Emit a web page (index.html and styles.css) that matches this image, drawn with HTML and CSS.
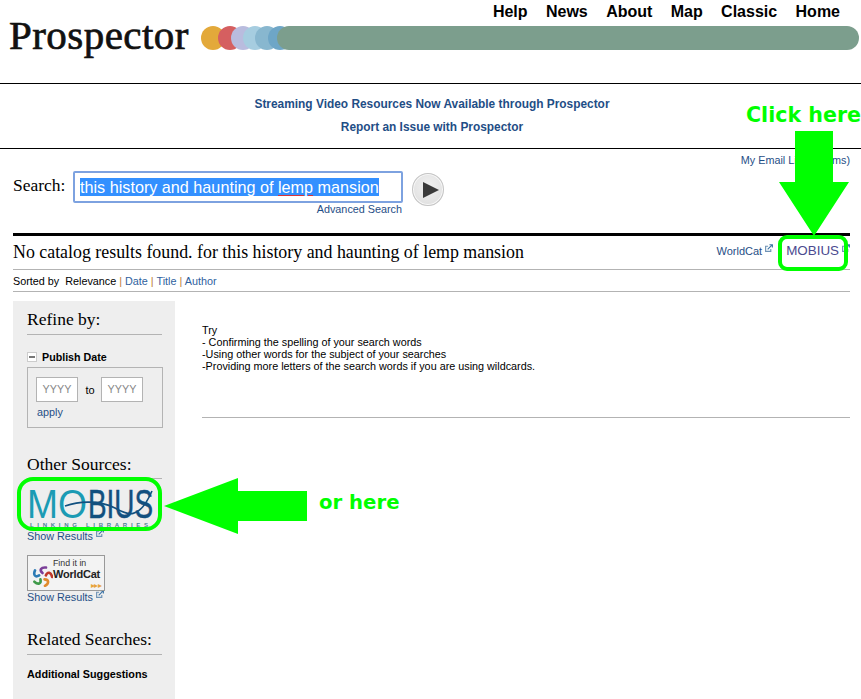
FILE: index.html
```html
<!DOCTYPE html>
<html lang="en">
<head>
<meta charset="utf-8">
<title>Prospector</title>
<link rel="stylesheet" href="styles.css">
</head>
<body>
<div class="page">
  <header class="masthead">
    <div class="brand">Prospector</div>
    <div class="mast-right">
      <nav class="topnav">
        <a>Help</a><a>News</a><a>About</a><a>Map</a><a>Classic</a><a>Home</a>
      </nav>
      <div class="dots">
        <svg class="dots-svg" width="660" height="26" viewBox="0 0 660 26">
          <circle cx="13" cy="12" r="12" fill="#e3a93a"/>
          <circle cx="30" cy="12" r="12" fill="#d55f60"/>
          <circle cx="43" cy="12" r="12" fill="#b9bcde"/>
          <circle cx="55" cy="12" r="12" fill="#a6cde0"/>
          <circle cx="67" cy="12" r="12" fill="#88b7cf"/>
          <circle cx="80" cy="12" r="12" fill="#6ea6c7"/>
          <rect x="77" y="0" width="582" height="24" rx="12" fill="#7c9e8d"/>
        </svg>
      </div>
    </div>
  </header>

  <section class="notices">
    <a>Streaming Video Resources Now Available through Prospector</a>
    <a>Report an Issue with Prospector</a>
  </section>

  <div class="email-row"><a>My Email List (0 items)</a></div>

  <section class="search">
    <label class="search-label">Search:</label>
    <div class="search-field">
      <div class="search-input"><span class="selected">this history and haunting of <span class="typo">lemp</span> mansion</span></div>
      <a class="advanced">Advanced Search</a>
    </div>
    <div class="go"><svg width="16" height="16" viewBox="0 0 16 16"><path d="M0 0 L16 8 L0 16 Z" fill="#3a3a3a"/></svg></div>
  </section>

  <section class="results-head">
    <h1>No catalog results found. for this history and haunting of lemp mansion</h1>
    <div class="other-links">
      <a>WorldCat<svg class="ext" viewBox="0 0 9 9"><use href="#ext"/></svg></a>
      <a class="mobius-link">MOBIUS<svg class="ext" viewBox="0 0 9 9"><use href="#ext"/></svg></a>
    </div>
  </section>
  <div class="sortbar">Sorted by &nbsp;Relevance <span class="sep">|</span> <a>Date</a> <span class="sep">|</span> <a>Title</a> <span class="sep">|</span> <a>Author</a></div>

  <div class="columns">
    <aside class="sidebar">
      <h2>Refine by:</h2>
      <div class="facet-title"><span class="minus"></span>Publish Date</div>
      <div class="facet-box">
        <div class="date-row">
          <span class="year">YYYY</span><span class="to">to</span><span class="year">YYYY</span>
        </div>
        <a class="apply">apply</a>
      </div>
      <h2 class="other">Other Sources:</h2>
      <div class="mobius-logo">
        <svg width="128" height="41" viewBox="0 0 128 41">
          <text x="0" y="31" class="logo-mo" textLength="60" lengthAdjust="spacingAndGlyphs">MO</text>
          <text x="61" y="31" class="logo-bius" textLength="65" lengthAdjust="spacingAndGlyphs">BIUS</text>
          <path d="M38 19 C50 15 70 12 88 21 C100 28 112 34 125 4" fill="none" stroke="#12507f" stroke-width="1.6"/>
          <text x="3" y="39.5" class="logo-tag" textLength="120">LINKING LIBRARIES</text>
        </svg>
      </div>
      <a class="show">Show Results<svg class="ext" viewBox="0 0 9 9"><use href="#ext"/></svg></a>
      <div class="wc-badge">
        <svg class="wc-mark" width="21" height="21" viewBox="0 0 21 21">
          <g fill="none" stroke-width="2.6" stroke-linecap="round">
            <path d="M10.5 7 C7 4 9 1 14 1.5" stroke="#7b3f98"/>
            <path d="M10.5 7 C7 4 9 1 14 1.5" stroke="#c0392b" transform="rotate(72 10.5 10.5)"/>
            <path d="M10.5 7 C7 4 9 1 14 1.5" stroke="#e08a2c" transform="rotate(144 10.5 10.5)"/>
            <path d="M10.5 7 C7 4 9 1 14 1.5" stroke="#3f9a4a" transform="rotate(216 10.5 10.5)"/>
            <path d="M10.5 7 C7 4 9 1 14 1.5" stroke="#2d7bb5" transform="rotate(288 10.5 10.5)"/>
          </g>
        </svg>
        <div class="wc-text"><span class="wc-find">Find it in</span><span class="wc-name">WorldCat</span></div>
        <span class="wc-arrows">&#9656;&#9656;&#9656;</span>
      </div>
      <a class="show">Show Results<svg class="ext" viewBox="0 0 9 9"><use href="#ext"/></svg></a>
      <h2 class="related">Related Searches:</h2>
      <div class="suggest">Additional Suggestions</div>
    </aside>
    <main class="main">
      <p class="tips">Try<br>- Confirming the spelling of your search words<br>-Using other words for the subject of your searches<br>-Providing more letters of the search words if you are using wildcards.</p>
      <hr class="main-rule">
    </main>
  </div>

  <svg width="0" height="0" class="defs"><defs>
    <g id="ext" fill="none" stroke="#6f93b5" stroke-width="1.3">
      <path d="M6.5 5.5 V8.3 H0.7 V2.5 H3.5"/>
      <path d="M3 6 L8 1 M5 0.8 H8.3 V4" stroke="#3f75a6"/>
    </g>
  </defs></svg>

  <!-- annotations drawn over the screenshot -->
  <div class="note note-click">Click here</div>
  <div class="note note-or">or here</div>
  <svg class="anno anno-down" width="72" height="110" viewBox="0 0 72 110">
    <path d="M16 0 H54 V51 H70 L35 105 L0 51 H16 Z" fill="#00ff00"/>
  </svg>
  <svg class="anno anno-left" width="144" height="58" viewBox="0 0 144 58">
    <path d="M0 29 L74 1 V14 H143 V44 H74 V57 Z" fill="#00ff00"/>
  </svg>
  <div class="ring ring-mobius"></div>
  <div class="ring ring-logo"></div>
</div>
</body>
</html>
```

FILE: styles.css
```css
* { box-sizing: border-box; }
html, body { margin: 0; padding: 0; background: #fff; }
body { font-family: "Liberation Sans", Arial, sans-serif; color: #000; overflow: hidden; }
a { color: #1f4e86; text-decoration: none; }
.page { position: relative; width: 861px; height: 699px; overflow: hidden; }

.masthead { display: flex; height: 84px; border-bottom: 1px solid #000; }
.brand { font-family: "Liberation Serif", serif; font-size: 41px; line-height: 46px; padding: 12px 0 0 9px; width: 200px; letter-spacing: 0.45px; color: #111; -webkit-text-stroke: 0.7px #111; }
.mast-right { flex: 1; display: flex; flex-direction: column; }
.topnav { display: flex; justify-content: flex-end; gap: 18.4px; padding: 2px 21px 0 0; height: 26px; }
.topnav a { color: #000; font-weight: bold; font-size: 16px; line-height: 19px; }
.dots { height: 26px; }
.dots-svg { display: block; }

.notices { height: 65px; border-bottom: 1px solid #000; display: flex; flex-direction: column; align-items: center; padding: 13px 0 0 3px; gap: 9px; }
.notices a { font-size: 11.9px; line-height: 14px; font-weight: bold; }

.email-row { text-align: right; padding: 5px 11px 0 0; height: 19px; font-size: 10.8px; line-height: 13px; }

.search { display: flex; align-items: flex-start; padding: 3px 0 0 13px; height: 65px; }
.search-label { font-family: "Liberation Serif", serif; font-size: 17.5px; line-height: 18px; padding-top: 5px; width: 60px; }
.search-field { width: 330px; display: flex; flex-direction: column; align-items: flex-end; }
.search-input { width: 330px; height: 32px; border: 2px solid #7da2e0; border-radius: 2px; padding: 5px 0 0 5px; font-size: 16.2px; line-height: 18px; }
.selected { background: #3390ff; color: #fff; display: inline-block; }
.typo { text-decoration: underline solid #d9343a 1px; text-underline-offset: 2px; }
.advanced { font-size: 10.8px; line-height: 13px; margin: 0 1px 0 0; }
.go { width: 32px; height: 33px; margin: 2px 0 0 9px; border-radius: 50%; border: 1px solid #c4c4c4; background: radial-gradient(circle at 50% 40%, #f1f1f1, #dcdcdc); box-shadow: inset 0 0 0 1px #f7f7f7; display: flex; align-items: center; justify-content: center; padding-left: 5px; }

.results-head { margin: 0 11px 0 13px; height: 37px; border-top: 3px solid #000; border-bottom: 1px solid #b3b3b3; display: flex; justify-content: space-between; align-items: center; }
.results-head h1 { margin: 0; padding-bottom: 2px; font-family: "Liberation Serif", serif; font-weight: normal; font-size: 17.86px; line-height: 20px; }
.other-links { display: flex; align-items: center; gap: 13px; font-size: 11px; padding-bottom: 5px; }
.mobius-link { font-size: 13.4px; color: #4b4a8f; }
.ext { width: 8px; height: 8px; margin-left: 3px; vertical-align: 3px; }

.sortbar { margin: 0 11px 0 13px; height: 22px; border-bottom: 1px solid #b3b3b3; font-size: 10.8px; line-height: 22px; }
.sep { color: #b97a3a; }
.sortbar a { color: #2f5f9e; }

.columns { display: flex; margin-top: 9px; }
.sidebar { width: 162px; margin-left: 13px; background: #eee; padding: 0 13px 0 14px; height: 398px; flex: none; }
.sidebar h2 { margin: 0; font-family: "Liberation Serif", serif; font-weight: normal; font-size: 17.5px; line-height: 20px; padding-top: 8px; padding-bottom: 5px; border-bottom: 1px solid #b3b3b3; }
.facet-title { margin-top: 15px; font-size: 10.7px; font-weight: bold; display: flex; align-items: center; height: 14px; }
.minus { width: 10px; height: 10px; background: #fff; border: 1px solid #ccc; margin-right: 5px; position: relative; display: block; }
.minus::after { content: ""; position: absolute; left: 1px; right: 1px; top: 3px; height: 2px; background: #777; }
.facet-box { margin-top: 3px; width: 136px; height: 61px; border: 1px solid #b3b3b3; padding: 9px 8px; }
.date-row { display: flex; align-items: center; }
.year { width: 42px; height: 25px; border: 1px solid #b3b3b3; background: #fff; color: #888; font-size: 10.8px; text-align: center; line-height: 23px; }
.to { width: 24px; text-align: center; font-size: 11px; margin-right: -1px; }
.apply { display: block; font-size: 10.8px; line-height: 13px; margin-top: 4px; margin-left: 1px; }
.sidebar .other { margin-top: 18px; padding-top: 8px; padding-bottom: 4px; }
.mobius-logo { height: 42px; margin-top: 8px; }
.mobius-logo svg { display: block; overflow: visible; }
.logo-mo { font-family: "Liberation Sans", sans-serif; font-size: 40px; fill: #1b9bb4; }
.logo-bius { font-family: "Liberation Sans", sans-serif; font-size: 40px; fill: #12507f; stroke: #12507f; stroke-width: 0.5px; }
.logo-tag { font-family: "Liberation Sans", sans-serif; font-size: 6px; font-weight: bold; fill: #4f8198; letter-spacing: 2px; }
.show { display: block; font-size: 10.8px; line-height: 13px; }
.wc-badge { position: relative; margin: 12px 0 -1px; width: 78px; height: 36px; border: 1px solid #999; background: #f3f3f3; display: flex; align-items: flex-end; padding: 0 0 3px 4px; gap: 0; }
.wc-text { display: flex; flex-direction: column; align-items: flex-start; margin-bottom: 7px; }
.wc-find { font-size: 8.8px; line-height: 12px; color: #333; }
.wc-name { font-size: 11px; font-weight: bold; line-height: 11px; letter-spacing: -0.2px; color: #222; }
.wc-arrows { position: absolute; right: 3px; bottom: 0; font-size: 8px; line-height: 9px; color: #e8a33c; letter-spacing: -0.5px; }
.wc-mark { flex: none; }
.sidebar .related { margin-top: 14px; padding-top: 11px; padding-bottom: 5px; }
.suggest { margin-top: 13px; font-size: 10.8px; font-weight: bold; }

.main { flex: 1; padding: 23px 11px 0 27px; }
.tips { margin: 0; font-size: 10.8px; line-height: 12px; }
.main-rule { margin: 45px 0 0; border: 0; border-top: 1px solid #b3b3b3; }

.defs { position: absolute; }
.note { position: absolute; color: #00ff00; font-family: "DejaVu Sans", sans-serif; font-weight: bold; white-space: nowrap; }
.note-click { left: 746px; top: 103px; font-size: 20.6px; line-height: 24px; }
.note-or { left: 319px; top: 491px; font-size: 19.7px; line-height: 24px; }
.anno { position: absolute; display: block; }
.anno-down { left: 779px; top: 131px; }
.anno-left { left: 164px; top: 477px; }
.ring { position: absolute; border: 4px solid #00ff00; }
.ring-mobius { left: 778px; top: 235px; width: 70px; height: 36px; border-radius: 9px; }
.ring-logo { left: 17px; top: 477px; width: 145px; height: 54px; border-radius: 16px; }
```
